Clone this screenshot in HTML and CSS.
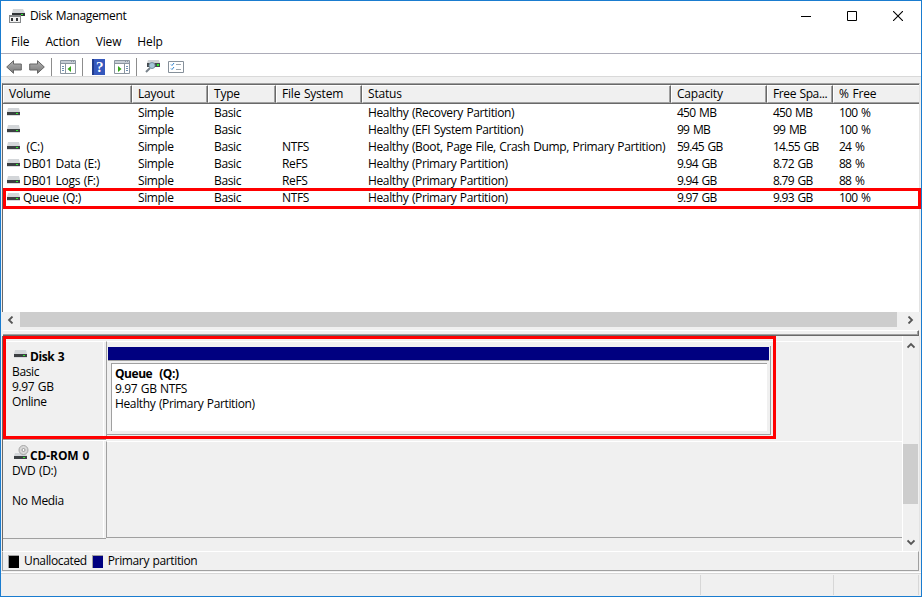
FILE: index.html
```html
<!DOCTYPE html>
<html lang="en">
<head>
	<meta charset="UTF-8">
	<meta name="viewport" content="width=device-width, initial-scale=1.0">
	<title>Disk Management</title>
	<link rel="stylesheet" href="styles.css">
</head>
<body>
	<svg class="defs" width="0" height="0">
		<defs>
			<linearGradient id="arrow-fill" x1="0" y1="0" x2="0" y2="1">
				<stop offset="0" stop-color="#b4b4b4"/>
				<stop offset="1" stop-color="#777"/>
			</linearGradient>
			<symbol id="drive" viewBox="0 0 13 8">
				<path d="M1 0h11l1 4H0z" fill="#d3d6d9"/>
				<rect y="4" width="13" height="3" fill="#3c4043"/>
				<rect y="7" width="13" height="1" fill="#d9dbdd"/>
				<rect x="9" y="5" width="2" height="1" fill="#2df02d"/>
			</symbol>
			<symbol id="arrow" viewBox="0 0 16 14">
				<path d="M.7 7 7.5.7v3.300h7.800v6H7.500v3.300z" fill="url(#arrow-fill)" stroke="#666"/>
			</symbol>
		</defs>
	</svg>

	<div class="window">
		<div class="title-bar">
			<svg class="app-icon" width="16" height="14" viewBox="0 0 16 14">
				<path d="M4 0h10l2 4H3z" fill="#d3d6d9"/>
				<rect x="3" y="4" width="13" height="3" fill="#303336"/>
				<rect x="12" y="5" width="2" height="1" fill="#2df02d"/>
				<path d="M0 6h12v8H0z" fill="#85888a"/>
				<path d="M1 8h10v5H1z" fill="#f1f1f1"/>
				<path d="M2 9h2v3H2zM7 9h2v3H7z" fill="#303336"/>
			</svg>
			<div class="title">Disk Management</div>
			<div class="window-buttons">
				<svg width="10" height="10"><path d="M0 5.500h10" stroke="#000"/></svg>
				<svg width="10" height="10"><path d="M.5.5h9v9h-9z" fill="none" stroke="#000"/></svg>
				<svg width="10" height="10"><path d="M0 0l10 10M10 0L0 10" stroke="#000" stroke-width="1.100"/></svg>
			</div>
		</div>

		<div class="menu">
			<span>File</span>
			<span>Action</span>
			<span>View</span>
			<span>Help</span>
		</div>

		<div class="toolbar">
			<svg class="back" width="16" height="14"><use href="#arrow"/></svg>
			<svg class="forward" width="16" height="14"><use href="#arrow"/></svg>
			<i class="divider"></i>
			<svg class="tool-tree" width="16" height="14" viewBox="0 0 16 14">
				<path d="M.5.5h15v13H.5z" fill="#fff" stroke="#8b95a0"/>
				<path d="M1 1h14v2H1z" fill="#c5ccd4"/>
				<path d="M1 3.500h14M5.500 4v9M11 1.500h1M13 1.500h1" stroke="#8b95a0"/>
				<path d="M2 6.500h2M2 8.500h2M2 10.500h2" stroke="#6e8fb2"/>
				<path d="M11 6v6L7.500 9z" fill="#35a51c"/>
			</svg>
			<i class="divider"></i>
			<svg class="tool-help" width="13" height="16" viewBox="0 0 13 16">
				<path d="M0 0h13v16H0z" fill="#3558bd"/>
				<path d="M0 0h2v16H0z" fill="#203b8c"/>
				<text x="7.500" y="13" text-anchor="middle">?</text>
			</svg>
			<svg class="tool-action" width="16" height="14" viewBox="0 0 16 14">
				<path d="M.5.5h15v13H.5z" fill="#fff" stroke="#8b95a0"/>
				<path d="M1 1h14v2H1z" fill="#c5ccd4"/>
				<path d="M1 3.500h14M10.500 4v9M11 1.500h1M13 1.500h1" stroke="#8b95a0"/>
				<path d="M12 6.500h2M12 8.500h2M12 10.500h2" stroke="#6e8fb2"/>
				<path d="M4 6v6l3.500-3z" fill="#35a51c"/>
			</svg>
			<i class="divider"></i>
			<svg class="tool-rescan" width="16" height="13" viewBox="0 0 16 13">
				<path d="M3 0h11l1 3H2z" fill="#ced1d4"/>
				<path d="M2 3h13v4H2z" fill="#43494d"/>
				<path d="M12 4h2v2h-2z" fill="#2df02d"/>
				<path d="M5 8 1 12" stroke="#78828a" stroke-width="2"/>
				<circle cx="7" cy="5.500" r="3" fill="#a5c5d9" stroke="#78909f"/>
			</svg>
			<svg class="tool-list" width="16" height="12" viewBox="0 0 16 12">
				<path d="M.5.5h15v11H.5z" fill="#fff" stroke="#86909a"/>
				<path d="M3 3.500l1 1 2-2.500M3 7.500l1 1 2-2.500" fill="none" stroke="#2f83cf"/>
				<path d="M8 3.500h5M8 8.500h5" stroke="#9da6ae"/>
			</svg>
		</div>

		<div class="volumes">
			<div class="row header">
				<div>Volume</div><div>Layout</div><div>Type</div><div>File System</div><div>Status</div><div>Capacity</div><div>Free Spa...</div><div>% Free</div>
			</div>
			<div class="row">
				<div><svg width="13" height="8"><use href="#drive"/></svg></div><div>Simple</div><div>Basic</div><div></div><div>Healthy (Recovery Partition)</div><div>450 MB</div><div>450 MB</div><div>100 %</div>
			</div>
			<div class="row">
				<div><svg width="13" height="8"><use href="#drive"/></svg></div><div>Simple</div><div>Basic</div><div></div><div>Healthy (EFI System Partition)</div><div>99 MB</div><div>99 MB</div><div>100 %</div>
			</div>
			<div class="row">
				<div><svg width="13" height="8"><use href="#drive"/></svg>&nbsp;(C:)</div><div>Simple</div><div>Basic</div><div>NTFS</div><div>Healthy (Boot, Page File, Crash Dump, Primary Partition)</div><div>59.45 GB</div><div>14.55 GB</div><div>24 %</div>
			</div>
			<div class="row">
				<div><svg width="13" height="8"><use href="#drive"/></svg>DB01 Data (E:)</div><div>Simple</div><div>Basic</div><div>ReFS</div><div>Healthy (Primary Partition)</div><div>9.94 GB</div><div>8.72 GB</div><div>88 %</div>
			</div>
			<div class="row">
				<div><svg width="13" height="8"><use href="#drive"/></svg>DB01 Logs (F:)</div><div>Simple</div><div>Basic</div><div>ReFS</div><div>Healthy (Primary Partition)</div><div>9.94 GB</div><div>8.79 GB</div><div>88 %</div>
			</div>
			<div class="row marked">
				<div><svg width="13" height="8"><use href="#drive"/></svg>Queue (Q:)</div><div>Simple</div><div>Basic</div><div>NTFS</div><div>Healthy (Primary Partition)</div><div>9.97 GB</div><div>9.93 GB</div><div>100 %</div>
			</div>
		</div>

		<div class="h-scroll">
			<svg width="7" height="8"><path d="M5.500.5 2 4l3.500 3.500"/></svg>
			<div class="h-thumb"></div>
			<svg width="7" height="8"><path d="M1.500.5 5 4 1.500 7.500"/></svg>
		</div>
		<div class="splitter"></div>

		<div class="disks">
			<div class="disk-list">
				<div class="disk marked">
					<div class="disk-label">
						<div class="disk-name"><svg width="13" height="8"><use href="#drive"/></svg>Disk 3</div>
						<div>Basic</div>
						<div>9.97 GB</div>
						<div>Online</div>
					</div>
					<div class="disk-graph">
						<div class="partition">
							<div class="partition-bar"></div>
							<div class="partition-info">
								<b>Queue&nbsp; (Q:)</b>
								<div>9.97 GB NTFS</div>
								<div>Healthy (Primary Partition)</div>
							</div>
						</div>
					</div>
				</div>
				<div class="disk">
					<div class="disk-label">
						<div class="disk-name cd-name">
							<svg width="15" height="15" viewBox="0 0 15 15">
								<path d="M1 8h11l1 3H0z" fill="#d3d6d9"/>
								<circle cx="9.500" cy="5" r="4.500" fill="#d9d9d9" stroke="#a5a5a5"/>
								<circle cx="9.500" cy="5" r="1.500" fill="#fff" stroke="#999"/>
								<path d="M0 11h13v3H0z" fill="#3c4043"/>
								<path d="M9 12h2v1H9z" fill="#2df02d"/>
							</svg>CD-ROM 0
						</div>
						<div>DVD (D:)</div>
						<div>&nbsp;</div>
						<div>No Media</div>
					</div>
					<div class="disk-graph"></div>
				</div>
			</div>
			<div class="v-scroll">
				<svg width="8" height="7"><path d="M.5 5.500 4 2l3.500 3.500"/></svg>
				<div class="v-thumb"></div>
				<svg width="8" height="7"><path d="M.5 1.500 4 5l3.500-3.500"/></svg>
			</div>
		</div>

		<div class="legend">
			<i class="swatch unallocated"></i><span>Unallocated</span>
			<i class="swatch primary"></i><span>Primary partition</span>
		</div>
		<div class="status-bar">
			<div></div><div></div><div></div>
		</div>
	</div>
</body>
</html>
```
FILE: styles.css
```css
*,
*::after {
	box-sizing: border-box;
	margin: 0;
	padding: 0;
}
body {
	font-family: "Open Sans", "Noto Sans", sans-serif;
	font-size: 12px;
	letter-spacing: -0.37px;
	word-spacing: 0.8px;
	color: #000;
}
svg {
	display: block;
	flex: none;
}
.defs {
	position: absolute;
}
.window {
	width: 922px;
	height: 597px;
	border: 1px solid #1a7ccf;
	background: #f0f0f0;
	display: flex;
	flex-direction: column;
	overflow: hidden;
}
.window > * {
	flex: none;
}

/* title, menu, toolbar */
.title-bar {
	height: 29px;
	display: flex;
	align-items: center;
	padding: 0 18px 0 8px;
	background: #fff;
}
.title {
	margin-left: 5px;
	flex: 1;
}
.window-buttons {
	display: flex;
	gap: 36px;
}
.menu {
	height: 24px;
	display: flex;
	gap: 16px;
	padding-left: 10px;
	line-height: 24px;
	letter-spacing: -0.15px;
	background: #fff;
	border-bottom: 1px solid #acacb8;
}
.toolbar {
	height: 23px;
	display: flex;
	align-items: center;
	padding: 3px 0 0 5px;
	background: #fff;
	border-bottom: 1px solid #d9d9d9;
}
.forward {
	transform: scaleX(-1);
	margin-left: 7px;
}
.divider {
	width: 1px;
	height: 18px;
	background: #8d8d8d;
	margin: 0 8px 0 6px;
}
.tool-help {
	margin: 0 9px 0 1px;
}
.tool-help text {
	font-family: "Liberation Serif", serif;
	font-size: 15px;
	font-weight: bold;
	fill: #fff;
}
.tool-list {
	margin-left: 7px;
}

/* volume table */
.volumes {
	height: 229px;
	margin: 6px 1px 0;
	border-top: 1px solid #a0a0a0;
	border-left: 1px solid #696969;
	border-right: 1px solid #e3e3e3;
	background: #fff;
}
.row {
	position: relative;
	display: grid;
	grid-template-columns: 129px 76px 68px 86px 309px 96px 66px 1fr;
	height: 17px;
	line-height: 17px;
	white-space: nowrap;
}
.row > div {
	display: flex;
	align-items: center;
	padding-left: 6px;
}
.row:not(.header) > div:first-child {
	padding-left: 4px;
	letter-spacing: -0.3px;
}
.row:not(.header) > div:nth-child(n+6) {
	letter-spacing: -0.75px;
	word-spacing: 1.4px;
}
.row svg {
	margin: -1px 3px 0 0;
}
.header {
	height: 20px;
	line-height: 16px;
	letter-spacing: -0.2px;
	background: #f0f0f0;
	border-top: 1px solid #696969;
	border-bottom: 1px solid #696969;
}
.header > div {
	border: 1px solid #fff;
	border-right: 1px solid #696969;
	border-bottom-color: #a0a0a0;
	padding-left: 5px;
	box-shadow: inset -1px 0 #a0a0a0;
}
.header > div:last-child {
	border-right: none;
	box-shadow: none;
}
.header > div:nth-child(7) {
	letter-spacing: -0.4px;
}
.row.marked::after {
	content: "";
	position: absolute;
	inset: -1px -2px -3px 0;
	border: 3px solid #f00;
}

/* scrollbars */
.h-scroll {
	height: 15px;
	margin: 0 2px;
	display: flex;
	align-items: center;
	padding: 0 5px 0 4px;
}
.h-scroll svg path,
.v-scroll svg path {
	fill: none;
	stroke: #555;
	stroke-width: 1.8;
}
.h-thumb {
	width: 877px;
	height: 15px;
	margin: 0 10px 0 6px;
	background: #cdcdcd;
}
.splitter {
	height: 6px;
	margin: 3px 2px 0;
	border-top: 1px solid #fff;
	border-bottom: 1px solid #696969;
	border-right: 1px solid #696969;
	box-shadow: inset -1px -1px #a0a0a0;
}
.v-scroll {
	width: 16px;
	display: flex;
	flex-direction: column;
	align-items: center;
	padding: 6px 0 5px;
	border-right: 1px solid #f0f0f0;
}
.v-thumb {
	width: 15px;
	height: 60px;
	margin: 95px 0 auto;
	background: #cdcdcd;
}

/* graphical view */
.disks {
	height: 215px;
	display: flex;
	margin: 0 1px;
	border-left: 1px solid #696969;
	border-right: 1px solid #e3e3e3;
}
.disk-list {
	flex: 1;
	padding-top: 5px;
	border-right: 1px solid #fff;
}
.disk {
	position: relative;
	display: flex;
	height: 99px;
}
.disk-label {
	width: 103px;
	padding: 7px 0 0 9px;
	line-height: 15px;
	border-top: 1px solid #fff;
	border-bottom: 1px solid #a0a0a0;
	box-shadow: inset -2px 0 #f0f0f0, inset -3px 0 #fff;
}
.disk-name {
	display: flex;
	align-items: center;
	font-weight: bold;
	letter-spacing: -0.4px;
}
.disk-name svg {
	margin: -5px 3px 0 2px;
}
.cd-name {
	letter-spacing: -0.1px;
}
.cd-name svg {
	margin: -7px 1px 0 2px;
}
.disk-graph {
	flex: 1;
	margin-bottom: 1px;
	padding-top: 4px;
	border-top: 1px solid #fff;
	border-left: 1px solid #a0a0a0;
}
.disk:not(.marked) .disk-graph {
	margin-top: 1px;
	border-bottom: 1px solid #a0a0a0;
}
.disk.marked::after {
	content: "";
	position: absolute;
	left: 0;
	top: -5px;
	width: 773px;
	height: 103px;
	border: 3px solid #f00;
}
.partition {
	width: 664px;
	height: 89px;
	padding: 1px 0 0 1px;
	border-right: 1px solid #a0a0a0;
	border-bottom: 1px solid #a0a0a0;
}
.partition-bar {
	height: 14px;
	margin-right: 1px;
	background: #000080;
	border-bottom: 1px solid #a0a0a0;
}
.partition-info {
	width: 656px;
	height: 68px;
	margin: 2px 0 0 3px;
	padding: 2px 0 0 3px;
	line-height: 15px;
	background: #fff;
	border-top: 1px solid #a0a0a0;
	border-left: 1px solid #a0a0a0;
}
.partition-info b {
	display: block;
	letter-spacing: -0.45px;
}

/* legend and status bar */
.legend {
	height: 20px;
	display: flex;
	align-items: center;
	margin: 0 2px 0 1px;
	padding-left: 5px;
	line-height: 16px;
	border: 1px solid #a0a0a0;
	border-top-color: #fff;
}
.swatch {
	width: 11px;
	height: 13px;
	border: 1px solid #a0a0a0;
	border-right: none;
	border-bottom: none;
}
.legend span {
	margin: -1px 5px 0 5px;
}
.unallocated {
	background: #000;
}
.primary {
	background: #000080;
}
.status-bar {
	height: 23px;
	margin-top: auto;
	display: flex;
	padding: 1px 2px 1px 0;
	border-top: 1px solid #d7d7d7;
	box-shadow: 0 -1px #fff;
}
.status-bar > div {
	border-right: 1px solid #d7d7d7;
	width: 700px;
}
.status-bar > div:nth-child(2) {
	width: 133px;
}
.status-bar > div:nth-child(3) {
	width: 85px;
}
```
